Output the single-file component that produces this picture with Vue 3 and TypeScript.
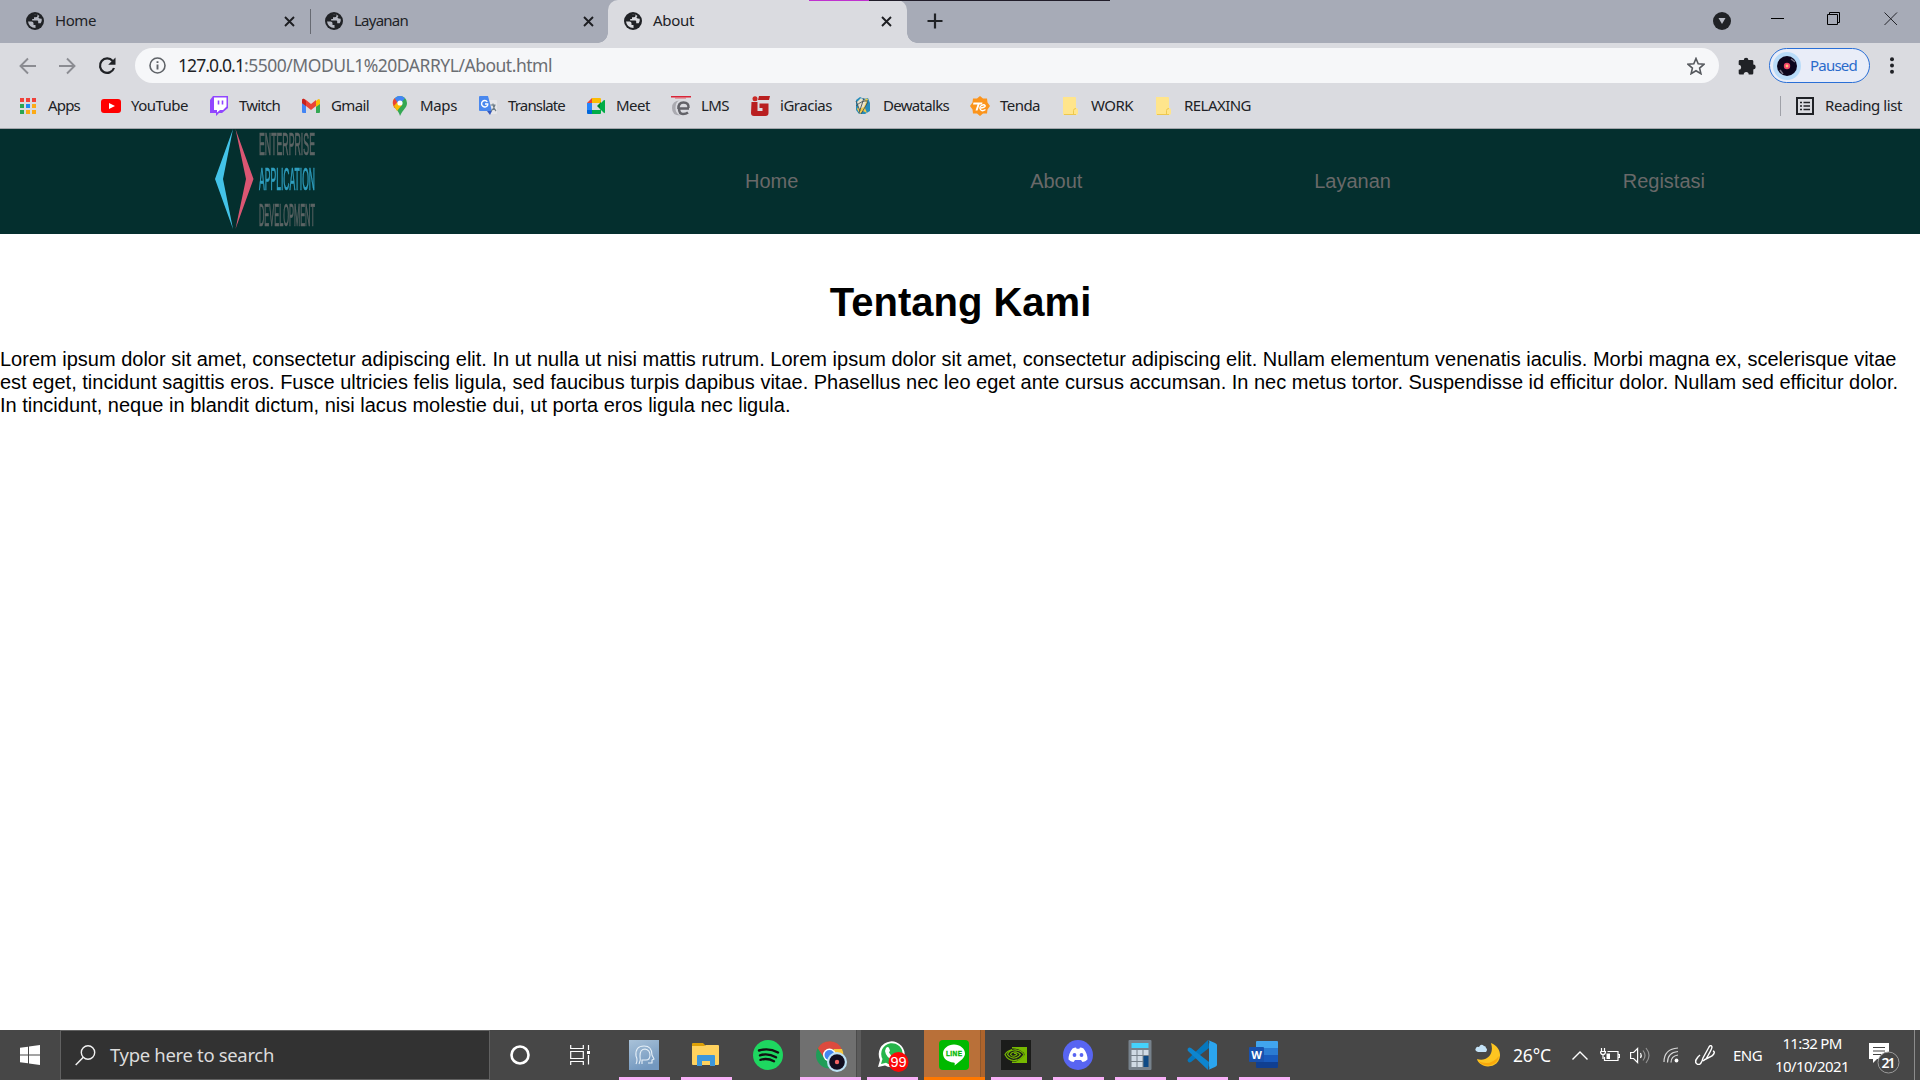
<script setup lang="ts">
import type { Directive } from 'vue'

// Spreads a label's letters so that it takes exactly the given width.
const vFit: Directive<HTMLElement, number> = {
  mounted(el, { value }) {
    const range = document.createRange()
    range.selectNodeContents(el)
    const natural = range.getBoundingClientRect().width
    const count = (el.textContent ?? '').length
    el.style.letterSpacing = `${(value - natural) / count}px`
  },
}

interface Tab { title: string; width: number; active?: boolean }
interface Bookmark { label: string; width: number; icon: string }
interface TaskApp { name: string; icon: string; state?: string }

const tabs: Tab[] = [
  { title: 'Home', width: 41 },
  { title: 'Layanan', width: 54 },
  { title: 'About', width: 41, active: true },
]

const folder = '<path d="M2 1h12q1 0 1 1v10q2 0 2 2v3q0 2-2 2H3q-1 0-1-1z" fill="#ffe58c"/><path d="M12.500 18.500v-4q0-2 2.500-2M3 18.500h12" fill="none" stroke="#eec84e"/>'

const bookmarks: Bookmark[] = [
  { label: 'Apps', width: 32, icon: '<g><path d="M2 2h4v4H2zM8 2h4v4H8zM14 2h4v4h-4z" fill="#f0413a"/><path d="M2 8h4v4H2zM2 14h4v4H2z" fill="#2aa552"/><path d="M8 8h4v4H8z" fill="#1e88f5"/><path d="M14 8h4v4h-4zM8 14h4v4H8zM14 14h4v4h-4z" fill="#fcaa16"/></g>' },
  { label: 'YouTube', width: 57, icon: '<rect y="3" width="20" height="14" rx="3" fill="#f00"/><path d="M8 7l6 3-6 3z" fill="#fff"/>' },
  { label: 'Twitch', width: 41, icon: '<path d="M4 0h15v12l-6 5h-3l-3 3v-3H1V4z" fill="#9146ff"/><path d="M5 1.500h12.500v9L14 14h-3l-3 2.500V14H5z" fill="#fff"/><path d="M9.500 4.500v4M13.500 4.500v4" stroke="#9146ff" stroke-width="1.600"/>' },
  { label: 'Gmail', width: 38, icon: '<path d="M1 5h4v12H2q-1 0-1-1z" fill="#4285f4"/><path d="M15 5h4v11q0 1-1 1h-3z" fill="#34a853"/><path d="M15 5q4-4 4 0v3l-4 3z" fill="#fbbc04"/><path d="M1 5q0-4 4-1l5 4 5-4v6l-5 4-5-4-4-3z" fill="#ea4335"/><path d="M1 5q0-3 2-2l2 2v5L1 7z" fill="#c5221f"/>' },
  { label: 'Maps', width: 37, icon: '<path d="M10 0a7 7 0 0 1 7 7c0 5-4 6-7 13C9 14 3 12 3 7a7 7 0 0 1 7-7z" fill="#34a853"/><path d="M3.500 10Q1.500 5 5 2l4 4-5 6z" fill="#fbbc04"/><path d="M3.500 9.500Q1.500 5 5 2l4 5-4.500 5z" fill="#ea4335"/><path d="M4 10l5-6 3 5-5 6z" fill="#fbbc04"/><path d="M4.700 2.300Q10-2.500 15 2.300L9 9z" fill="#4285f4"/><circle cx="10" cy="7" r="2.600" fill="#fff"/>' },
  { label: 'Translate', width: 57, icon: '<path d="M8 4h10q1 0 1 1v12q0 1-1 1h-6z" fill="#e6e6e9"/><path d="M2 0h8l4 15H2q-1 0-1-1V1q0-1 1-1z" fill="#4a88ee"/><path d="M9 15h5l-2 4z" fill="#3457bd"/><path d="M9.300 5.800A3.200 3.200 0 1 0 9.700 9V8H7" fill="none" stroke="#fff" stroke-width="1.400"/><path d="M12.500 9h5M15 7.500V9q1 4 3 6M17 9q-1 4-4 6" fill="none" stroke="#6d7d88" stroke-width="1.100"/>' },
  { label: 'Meet', width: 34, icon: '<path d="M6 2h8q1 0 1 1v4H6z" fill="#fbbc04"/><path d="M6 2v5H1z" fill="#ea4335"/><path d="M1 7h5v7H1z" fill="#2684fc"/><path d="M1 14h5v4H2q-1 0-1-1z" fill="#0066da"/><path d="M6 14h9v3q0 1-1 1H6z" fill="#00ac47"/><path d="M11 10l4-4v8z" fill="#00832d"/><path d="M14 8l4-4q1-.5 1 1v11q0 1.500-1 1l-4-4z" fill="#00ac47"/>' },
  { label: 'LMS', width: 28, icon: '<path d="M0 0h20v1.500H0z" fill="#da2437"/><path d="M4 1.500h11v1H4z" fill="#e0606c"/><path d="M9 4.500Q1 4.500 1 12t8 7.500Q4 17 4.500 11T9 4.500z" fill="#aaaab0"/><path d="M18 12.500H8Q8 18 12 18q3 0 5-1.500" fill="none" stroke="#626268" stroke-width="2.500"/><path d="M7.500 13Q7 6.500 12.500 6.500T17.500 12" fill="none" stroke="#626268" stroke-width="2.500"/>' },
  { label: 'iGracias', width: 52, icon: '<path d="M9 0h11l-1 4H8zM1.500 6h6v9h5v-3h-3V7.500h9V17q0 3-3 3H4q-3 0-3-3z" fill="#b91f20"/><circle cx="5" cy="2.700" r="2.500" fill="#c92a26"/>' },
  { label: 'Dewatalks', width: 66, icon: '<path d="M3 4l4-3 4 2 4-1 2 5v8l-5 3H6l-3-4z" fill="#258dbb"/><path d="M9 8q4-7 6-5l-3 9 2 5-4-2-3 3-3-5 3-5z" fill="#f0ca4a"/><path d="M4 6l4-4 5 4-2 5-5 2z" fill="#e9e2cc"/><path d="M3 5l4 10M11 2l-5 15M3 10q6-6 12-5M15 6l-7 12" stroke="#45525b" fill="none" stroke-width=".9"/>' },
  { label: 'Tenda', width: 40, icon: '<path d="M10 0l3 2.500 4 0 .5 4L20 10l-2.500 3.500-.5 4-4 0L10 20l-3-2.500-4 0-.5-4L0 10l2.500-3.500.5-4 4 0z" fill="#fb941c"/><path d="M3.500 6.500h9L12 8.500H9.500l-2 6h-2l2-6H3z" fill="#fff"/><path d="M11 12q5-1 4-2.500t-3.500 0-1 4 5 0" fill="none" stroke="#fff" stroke-width="1.400"/>' },
  { label: 'WORK', width: 42, icon: folder },
  { label: 'RELAXING', width: 67, icon: folder },
]

const apps: TaskApp[] = [
  { name: 'head', icon: '<linearGradient id="hd" x2=".4" y2="1"><stop stop-color="#a9c2d9"/><stop offset="1" stop-color="#7398bf"/></linearGradient><path d="M0 0h30v30H0z" fill="url(#hd)"/><path d="M7 24q2-4 0-8Q6 6 15 6q8 0 8 9l2 4-2 1v3h-4M10 24q2-4 1-8 0-7 5-7 5 1 5 6 0 5-4 5h-4v4" fill="none" stroke="#e5eff7" stroke-width="1.100"/>' },
  { name: 'explorer', icon: '<path d="M1 4q0-1 1-1h10l2 2v4H1z" fill="#dda006"/><path d="M1 6h12l2-1h12q1 0 1 1v18q0 1-1 1H2q-1 0-1-1z" fill="#ffd25e"/><path d="M6 26V16q0-1 1-1h16q1 0 1 1v10h-5v-5h-8v5z" fill="#3c97dc"/>' },
  { name: 'spotify', state: 'idle', icon: '<circle cx="15" cy="15" r="15" fill="#1ed760"/><path d="M6 10.500q10-3 19 2M7 15.300q8-2.500 16 2M7.500 19.800q7-2 13.500 1.500" stroke="#111" fill="none" stroke-linecap="round" stroke-width="2.400"/>' },
  { name: 'chrome', state: 'open', icon: '<circle cx="14.500" cy="15" r="13.500" fill="#1f9d58"/><path d="M2.800 8.300A13.500 13.500 0 0 1 27 9.500H14.500L8.500 17z" fill="#dc4a3e"/><path d="M27 9A13.500 13.500 0 0 1 15.500 28.500L19.500 18l-1-9z" fill="#f8c63d"/><circle cx="14.500" cy="15" r="6.500" fill="#fff"/><circle cx="14.500" cy="15" r="5" fill="#4387f2"/><circle cx="22" cy="22" r="10" fill="#bde2f6"/><circle cx="22" cy="22" r="7.800" fill="#110d20"/><circle cx="22" cy="22" r="2.200" fill="#f36363"/>' },
  { name: 'whatsapp', icon: '<path d="M1 27l2-7A13 13 0 1 1 8 25.500z" fill="#fff"/><path d="M4 24l1.500-5A10.700 10.700 0 1 1 9 22.800z" fill="#27b54b"/><path d="M9 8q2-2 3 0l1 2.500-1 2q2 4 5 5l2-2 3 2q0 4-5 3Q9 18 8 11z" fill="#fff"/><circle cx="21.500" cy="22" r="10" fill="#fb0808"/><text x="21.500" y="27" text-anchor="middle" fill="#fff" font-size="14.500" font-family="Liberation Sans, sans-serif">99</text>' },
  { name: 'line', state: 'alert', icon: '<rect width="30" height="30" rx="4" fill="#00b900"/><path d="M15 4.500c6 0 11 4 11 9 0 4-4 7-10.500 12 .5-2 .5-3-1-3-6-.500-10.500-4-10.500-9s5-9 11-9z" fill="#fff"/><text x="15" y="16" text-anchor="middle" textLength="16" fill="#00b900" stroke="#00b900" stroke-width=".3" font-size="6.500" font-weight="700" font-family="Liberation Sans, sans-serif">LINE</text>' },
  { name: 'nvidia', icon: '<path d="M0 0h30v30H0z" fill="#1b1c1a"/><path d="M11 7h15v16H11z" fill="#76b900"/><path d="M11 8.500q8-.5 13 6-4 5-9 7h-4z" fill="#1b1c1a"/><path d="M11 9.500Q6 11 4 14.500q3 6 9 6 6 0 10-6-4-5-10-4.500-5 .5-6.500 4.500 3 4 7 3.500 4-.5 6-3.500-3-3-6.500-2.500Q10 12.500 9.500 14.500q1.500 2 3.500 1.700 2-.2 3-1.700-1.500-1.500-3-1" fill="none" stroke="#76b900" stroke-width="1.200"/>' },
  { name: 'discord', icon: '<circle cx="15" cy="15" r="15" fill="#5865f2"/><path d="M9.500 8.500q2-1 3.500-1l.7 1.200h2.600L17 7.500q2 0 3.500 1 4 5 4 11-2 2-5 2.500L18 20h-6l-1.500 2q-3-.5-5-2.500 0-6 4-11z" fill="#fff"/><ellipse cx="11.500" cy="15" rx="1.900" ry="2.100" fill="#5865f2"/><ellipse cx="18.500" cy="15" rx="1.900" ry="2.100" fill="#5865f2"/>' },
  { name: 'calculator', icon: '<rect x="3.500" width="23" height="30" rx="1" fill="#77828c"/><path d="M6.500 3h17v5h-17z" fill="#45d2fb"/><path d="M6.500 10h5v5h-5zM12.500 10h5v5h-5zM18.500 10h5v5h-5zM6.500 16h5v5h-5zM12.500 16h5v5h-5zM6.500 22h5v5h-5zM12.500 22h5v5h-5z" fill="#d0dbe5"/><path d="M18.500 16h5v11h-5z" fill="#0d4a86"/>' },
  { name: 'vscode', icon: '<path d="M22 8L4 22q-2 1-3-.5-1-1.500 0-2.500L21 0z" fill="#0578bf"/><path d="M22 22L4 8Q2 7 1 8.500 0 10 1 11l20 19z" fill="#0d85cf"/><path d="M21 0l7 3q2 1 2 2v20q0 1-2 2l-7 3q2-1 1-4V4q1-3-1-4z" fill="#2ba5ef"/>' },
  { name: 'word', icon: '<path d="M7 2q0-1 1-1h20q1 0 1 1v6H7z" fill="#41a5ee"/><path d="M7 8h22v7H7z" fill="#2b7cd3"/><path d="M7 15h22v7H7z" fill="#185abd"/><path d="M7 22h22v5q0 1-1 1H8q-1 0-1-1z" fill="#103f91"/><rect y="7" width="15" height="15" rx="1" fill="#1851ae"/><text x="7.500" y="18.500" text-anchor="middle" fill="#fff" font-size="11" font-weight="700" font-family="Open Sans, sans-serif">W</text>' },
]

const navLinks: string[] = ['Home', 'About', 'Layanan', 'Registasi']
</script>

<template>
  <div class="screen">
    <div class="tabstrip">
      <template v-for="(tab, i) in tabs" :key="tab.title">
        <i v-if="i === 1" class="tabsep"></i>
        <div class="tab" :class="{ active: tab.active }">
          <svg class="globe" viewBox="0 0 18 18"><circle cx="9" cy="9" r="9" fill="#202226" /><path class="land" d="M2 9.500h3.500q2 0 2 1.700V13h2v3Q3 16 2 9.500zM8 2.200h3.500v1.500q0 1.500-2 1.500H8V7H6.200v1.500h5q1 0 1 1v1.800h2.500q1.500-2 1-4.500l-2.200-.2-1.200-1.400 1.200-1.200Q11 1.700 8 2.200z" /></svg>
          <span v-fit="tab.width" class="tabtitle">{{ tab.title }}</span>
          <svg class="tabx" viewBox="0 0 11 11"><path d="M1 1l9 9M10 1l-9 9" stroke="#1d1e22" stroke-width="1.900" /></svg>
        </div>
      </template>
      <svg class="plus" viewBox="0 0 16 16"><path d="M8 .5v15M.5 8h15" stroke="#202226" stroke-width="2.200" /></svg>
      <div class="winctl">
        <svg width="18" height="18" viewBox="0 0 18 18" class="drop"><circle cx="9" cy="9" r="9" fill="#202226" /><path d="M5.500 6h7L9 12z" fill="#b9bcc6" /></svg>
        <svg width="13" height="14" viewBox="0 0 13 14" class="min"><path d="M0 7.500h13" stroke="#000" /></svg>
        <svg width="13" height="14" viewBox="0 0 13 14" class="max"><path d="M.5 2.500h10v10H.5zM2.500 2.500V.5h10v10h-2" fill="none" stroke="#000" /></svg>
        <svg width="14" height="14" viewBox="0 0 14 14"><path d="M.5.500l12.500 12.500M13 .500L.5 13" stroke="#24252a" /></svg>
      </div>
      <div class="topline"></div>
    </div>

    <div class="toolbar">
      <svg class="back" viewBox="0 0 18 18"><path d="M17 9H2M9 1.500L1.500 9 9 16.500" fill="none" stroke="#8b8c92" stroke-width="1.900" /></svg>
      <svg class="fwd" viewBox="0 0 18 18"><path d="M1 9h15M9 1.500L16.500 9 9 16.500" fill="none" stroke="#8b8c92" stroke-width="1.900" /></svg>
      <svg class="reload" viewBox="0 0 18 18"><path d="M14.700 4A7.200 7.200 0 1 0 16 11" fill="none" stroke="#202226" stroke-width="2.200" /><path d="M17.500.500v7.300h-7.300z" fill="#202226" /></svg>
      <div class="omnibox">
        <svg class="info" viewBox="0 0 17 17"><circle cx="8.500" cy="8.500" r="7.500" fill="none" stroke="#5f6368" stroke-width="1.600" /><path d="M8.500 7.500v5M8.500 4.200v1.900" stroke="#5f6368" stroke-width="1.900" /></svg>
        <span class="url"><span v-fit="66" class="host">127.0.0.1</span><span v-fit="308">:5500/MODUL1%20DARRYL/About.html</span></span>
        <svg class="star" viewBox="0 0 18 18"><path d="M9 1.500l2.200 5.300 5.700.5-4.300 3.800 1.300 5.600L9 13.700l-4.900 3 1.300-5.600L1.100 7.300l5.700-.5z" fill="none" stroke="#55585d" stroke-width="1.600" /></svg>
      </div>
      <svg class="puzzle" viewBox="0 0 18 18"><path d="M5.800 3a2.300 2.300 0 0 1 4.600 0H14q1.300 0 1.300 1.300v3.300a2.400 2.400 0 0 1 0 4.800v3.800q0 1.300-1.300 1.300h-3.300a2.500 2.500 0 0 0-5 0H2q-1.300 0-1.300-1.300v-3.400a2.500 2.500 0 0 0 0-5V4.300Q.7 3 2 3z" fill="#202226" /></svg>
      <div class="paused">
        <svg class="avatar" viewBox="0 0 28 28"><circle cx="14" cy="14" r="14" fill="#b9dcf9" /><circle cx="14" cy="14" r="10" fill="#0c071e" /><path d="M18 7l4 3M7 18l3 4" stroke="#777486" stroke-width="1.500" /><circle cx="14" cy="14" r="3.200" fill="#f2456b" /><circle cx="14" cy="14" r="1.400" fill="#ffc07a" /></svg>
        <span v-fit="47">Paused</span>
      </div>
      <svg class="dots" viewBox="0 0 4 17"><circle cx="2" cy="2.300" r="2" /><circle cx="2" cy="8.500" r="2" /><circle cx="2" cy="14.700" r="2" /></svg>
    </div>

    <div class="bookmarks">
      <div v-for="b in bookmarks" :key="b.label" class="bookmark">
        <svg width="20" height="20" viewBox="0 0 20 20" v-html="b.icon"></svg>
        <span v-fit="b.width" :style="{ width: b.width + 'px' }">{{ b.label }}</span>
      </div>
      <div class="reading">
        <svg width="18" height="18" viewBox="0 0 18 18"><path d="M1 1h16v16H1z" fill="none" stroke="#202226" stroke-width="2" /><path d="M4 5.500h2M4 9h2M4 12.500h2M7.500 5.500H14M7.500 9H14M7.500 12.500H14" stroke="#202226" stroke-width="1.500" /></svg>
        <span v-fit="77">Reading list</span>
      </div>
    </div>

    <header class="site">
      <svg class="logo" viewBox="0 0 100 100">
        <path d="M18 0L0 50l18 50L8 50z" fill="#43c3e8" />
        <path d="M20.500 0l18 50-18 50L31 50z" fill="#db5673" />
        <g class="logotext">
          <text x="44" y="25.500" textLength="56" lengthAdjust="spacingAndGlyphs" fill="#5c6464" stroke="#5c6464">ENTERPRISE</text>
          <text x="44" y="61" textLength="56" lengthAdjust="spacingAndGlyphs" fill="#2f9fc0" stroke="#2f9fc0">APPLICATION</text>
          <text x="44" y="97" textLength="56" lengthAdjust="spacingAndGlyphs" fill="#5c6464" stroke="#5c6464">DEVELOPMENT</text>
        </g>
      </svg>
      <nav>
        <a v-for="l in navLinks" :key="l">{{ l }}</a>
      </nav>
    </header>

    <main>
      <h1>Tentang Kami</h1>
      <p>
        Lorem ipsum dolor sit amet, consectetur adipiscing elit. In ut nulla ut nisi mattis rutrum. Lorem ipsum dolor sit amet, consectetur adipiscing elit. Nullam elementum venenatis iaculis. Morbi magna ex, scelerisque vitae est eget, tincidunt sagittis eros. Fusce ultricies felis ligula, sed faucibus turpis dapibus vitae. Phasellus nec leo eget ante cursus accumsan. In nec metus tortor. Suspendisse id efficitur dolor. Nullam sed efficitur dolor. In tincidunt, neque in blandit dictum, nisi lacus molestie dui, ut porta eros ligula nec ligula.
      </p>
    </main>

    <footer class="taskbar">
      <div class="start">
        <svg width="20" height="20" viewBox="0 0 20 20"><path d="M0 2.800l8-1.100v7.800H0zM9 1.500L20 0v9.500H9zM0 10.500h8v7.800l-8-1.100zM9 10.500h11V20L9 18.500z" fill="#fff" /></svg>
      </div>
      <div class="search">
        <svg width="21" height="21" viewBox="0 0 21 21"><circle cx="13" cy="7.500" r="6.700" fill="none" stroke="#f2f2f2" stroke-width="1.400" /><path d="M8.300 12.300L.7 20" stroke="#f2f2f2" stroke-width="1.500" /></svg>
        <span v-fit="164">Type here to search</span>
      </div>
      <svg class="cortana" viewBox="0 0 20 20"><circle cx="10" cy="10" r="8.500" fill="none" stroke="#fff" stroke-width="2.600" /></svg>
      <svg class="taskview" viewBox="0 0 21 20"><path d="M.7 0v3.500h12.600V0M.7 20v-3.500h12.600V20M.7 6.500h12.600v7H.7zM18.500 0v5M18.500 10v9.500" fill="none" stroke="#fff" stroke-width="1.200" /><path d="M17 6h3v3h-3z" fill="#fff" /></svg>
      <div class="apps">
        <div v-for="a in apps" :key="a.name" class="app" :class="a.state">
          <svg viewBox="0 0 30 30" v-html="a.icon"></svg>
        </div>
      </div>
      <div class="tray">
        <svg class="weather" viewBox="0 0 25 24"><path d="M16 0c12 5 11 18 3 22C11 26 3 21 2 16c8 3 18-3 14-16z" fill="#fdc521" /><path d="M24 13q-1 7-8 9T3 18q12 6 21-5z" fill="#f9a90d" /><path d="M3 9Q-1 8 1 5q1-2 3-1 2-4 5-1 2 0 2 2 2 1 0 4z" fill="#c4e3f8" /></svg>
        <span v-fit="38" class="temp">26°C</span>
        <svg class="chev" viewBox="0 0 16 9"><path d="M.5 8.500L8 1l7.500 7.500" fill="none" stroke="#fff" stroke-width="1.400" /></svg>
        <svg class="battery" viewBox="0 0 20 15"><path d="M7.500 3.500h10.500v9H4.500V9M18.500 6.500h1v3h-1M1.500 0v3M4.500 0v3M.5 3.500h5q0 3-2.500 3t-2.500-3M3 6v5" fill="none" stroke="#fff" stroke-width="1.200" /><path d="M6.500 5.500H10V11H6.500z" fill="#fff" /></svg>
        <svg class="volume" viewBox="0 0 20 17"><path d="M.6 5.500h3l4-4v14l-4-4h-3z" fill="none" stroke="#fff" stroke-width="1.200" /><path d="M10.500 6q1.500 2.500 0 5" fill="none" stroke="#fff" stroke-width="1.200" /><path d="M13 3.500q4 5 0 10M16 1q6 7.500 0 15" fill="none" stroke="#949494" stroke-width="1.200" /></svg>
        <svg class="wifi" viewBox="0 0 16 16"><path d="M1 15Q1 2 15 1M4.500 15.500Q4.500 5.500 15 4.500M8 15.500Q8 9 15 8" fill="none" stroke="#d8d8d8" stroke-width="1.200" /><circle cx="13.500" cy="13.500" r="1.900" fill="#fff" /></svg>
        <svg class="pen" viewBox="0 0 20 20"><path d="M3 12Q-1 17 2 19t5-3l1-3 6-11q2-3 3 0 0 2-6 12l-3 2M5 10q-6 5-4 8M9 15l8-4q4-4 1-5" fill="none" stroke="#fff" stroke-width="1.400" /></svg>
        <span v-fit="29" class="lang">ENG</span>
        <div class="clock"><span v-fit="59">11:32 PM</span><span v-fit="74">10/10/2021</span></div>
        <svg class="notif" viewBox="0 0 34 32"><path d="M0 1h20v16H8l-4 4v-4H0z" fill="#fff" /><path d="M4 5.500h12M4 9h12M4 12.500h8" stroke="#444" stroke-width="1.200" /><circle cx="19.500" cy="20.500" r="10.500" fill="#454545" stroke="#9a9a9a" /><text x="19.500" y="25.500" text-anchor="middle" textLength="14" fill="#fff">21</text></svg>
      </div>
    </footer>
  </div>
</template>

<style>
body {
  margin: 0;
  overflow: hidden;
}
</style>

<style scoped>
.screen {
  width: 1920px;
  height: 1080px;
  display: flex;
  flex-direction: column;
  overflow: hidden;
  background: #fff;
  font-family: "Noto Sans", "Open Sans", sans-serif;
  font-size: 15px;
  color: #202226;
}
.screen * {
  box-sizing: border-box;
}
svg {
  display: block;
  flex: none;
}
span {
  white-space: nowrap;
}
.tabtitle,
.url,
.paused span,
.bookmark span,
.reading span,
.search span {
  padding-bottom: 2px;
}
.tabstrip {
  position: relative;
  height: 43px;
  flex: none;
  display: flex;
  background: #a7abb7;
}
.topline {
  position: absolute;
  left: 809px;
  top: 0;
  width: 301px;
  height: 1px;
  background: linear-gradient(90deg, #c031cf 60px, #211d2a 60px);
}
.tabsep {
  width: 1px;
  height: 25px;
  margin: 9px -1px 0 0;
  background: #676a72;
}
.tab {
  width: 299px;
  height: 43px;
  padding: 0 15px 1px 15px;
  display: flex;
  align-items: center;
}
.tab:first-child {
  width: 310px;
  padding-left: 26px;
}
.tab.active {
  position: relative;
  width: 299px;
  margin-left: -1px;
  padding-left: 16px;
  border-radius: 10px 10px 0 0;
  background: #dadbe0;
}
.tab.active::before,
.tab.active::after {
  content: "";
  position: absolute;
  bottom: 0;
  width: 10px;
  height: 10px;
}
.tab.active::before {
  left: -10px;
  background: radial-gradient(circle at 0 0, transparent 9.5px, #dadbe0 10px);
}
.tab.active::after {
  right: -10px;
  background: radial-gradient(circle at 100% 0, transparent 9.5px, #dadbe0 10px);
}
.globe {
  width: 18px;
  height: 18px;
}
.land {
  fill: #b4b7c1;
}
.active .land {
  fill: #dadbe0;
}
.tabtitle {
  margin-left: 11px;
  flex: 1;
}
.tabx {
  width: 11px;
  height: 11px;
}
.plus {
  width: 16px;
  height: 16px;
  margin: 13px 0 0 20px;
}
.winctl {
  display: flex;
  margin: 12px 22px 0 auto;
}
.drop {
  margin-right: 40px;
}
.min {
  margin-right: 43px;
  margin-top: -1px;
}
.max {
  margin-right: 44px;
}
.toolbar {
  height: 44px;
  flex: none;
  display: flex;
  align-items: center;
  padding: 1px 26px 0 19px;
  background: #dadbe0;
}
.back,
.fwd,
.reload {
  width: 18px;
  height: 18px;
}
.fwd {
  margin-left: 21px;
}
.reload {
  margin-left: 22px;
}
.omnibox {
  width: 1584px;
  height: 35px;
  margin-left: 19px;
  display: flex;
  align-items: center;
  padding: 0 14px;
  border-radius: 18px;
  background: #f6f7f9;
}
.info {
  width: 17px;
  height: 17px;
}
.url {
  flex: 1;
  margin-left: 12px;
  font-size: 17.5px;
  color: #6b6e73;
}
.host {
  color: #202226;
}
.star {
  width: 18px;
  height: 18px;
}
.puzzle {
  width: 18px;
  height: 18px;
  margin-left: 19px;
}
.paused {
  width: 101px;
  height: 35px;
  margin-left: 13px;
  display: flex;
  align-items: center;
  padding-left: 3px;
  gap: 9px;
  border: 1px solid #2a6fd6;
  border-radius: 18px;
  background: #e9edf8;
  color: #2a6bcb;
}
.avatar {
  width: 28px;
  height: 28px;
}
.dots {
  width: 4px;
  height: 17px;
  margin-left: auto;
  fill: #202226;
}
.bookmarks {
  height: 42px;
  flex: none;
  display: flex;
  align-items: center;
  gap: 21px;
  padding: 0 18px 4px 18px;
  border-bottom: 1px solid #a2a5ab;
  background: #dadbe0;
}
.bookmark {
  display: flex;
  align-items: center;
  gap: 10px;
}
.reading {
  display: flex;
  align-items: center;
  height: 20px;
  gap: 11px;
  margin-left: auto;
  padding-left: 15px;
  border-left: 1px solid #9fa1a8;
}
.site {
  height: 105px;
  flex: none;
  display: flex;
  padding: 0 215px;
  justify-content: space-between;
  background: #042f2e;
  font-family: "Liberation Sans", Arial, sans-serif;
}
.logo {
  width: 100px;
  height: 100px;
  overflow: visible;
  filter: blur(0.5px);
}
.logotext {
  font: 30.5px "Liberation Sans", Arial, sans-serif;
  stroke-width: 0.7px;
}
nav {
  width: 960px;
  display: flex;
  align-items: center;
  justify-content: space-between;
  font-size: 20px;
  color: #696969;
}
main {
  flex: 1;
  font-family: "Liberation Sans", Arial, sans-serif;
  color: #000;
}
h1 {
  margin: 45px 0 0;
  padding-left: 1px;
  font-size: 40px;
  line-height: 46px;
  text-align: center;
}
p {
  margin: 23px 0 0;
  font-size: 20px;
  line-height: 23px;
}
.taskbar {
  height: 50px;
  flex: none;
  display: flex;
  align-items: center;
  background: #474747;
  color: #fff;
}
.start {
  width: 60px;
  padding-left: 20px;
}
.search {
  width: 430px;
  height: 50px;
  display: flex;
  align-items: center;
  padding-left: 14px;
  gap: 14px;
  border: 1px solid #616161;
  background: #323232;
  color: #dcdcdc;
  font-size: 18.5px;
}
.cortana {
  width: 20px;
  height: 20px;
  margin-left: 20px;
}
.taskview {
  width: 21px;
  height: 20px;
  margin-left: 40px;
}
.apps {
  display: flex;
  margin-left: 28px;
}
.app {
  position: relative;
  width: 51px;
  height: 50px;
  margin-right: 11px;
  padding: 10px 0 0 10px;
  border-bottom: 3px solid #f8b1f8;
}
.app svg {
  width: 30px;
  height: 30px;
  overflow: visible;
}
.app.idle {
  border-color: transparent;
}
.app.open,
.app.alert {
  width: 61px;
  margin: 0 6px 0 -5px;
  padding-left: 15px;
}
.app.open {
  background: linear-gradient(90deg, #707070 56px, #4b4b4b 56px, #4b4b4b 57px, #5b5b5b 57px);
}
.app.alert {
  border-color: #ff7800;
  background: linear-gradient(90deg, #b97039 56px, #8e572c 56px, #8e572c 57px, #ad642c 57px);
}
.tray {
  display: flex;
  align-items: center;
  height: 50px;
  margin-left: auto;
  border-right: 1px solid #8c8c8c;
  margin-right: 5px;
}
.weather {
  width: 25px;
  height: 24px;
}
.temp {
  width: 38px;
  margin-left: 13px;
  font-size: 17.5px;
}
.chev {
  width: 16px;
  height: 9px;
  margin-left: 21px;
}
.battery {
  width: 20px;
  height: 15px;
  margin-left: 12px;
}
.volume {
  width: 20px;
  height: 17px;
  margin-left: 10px;
}
.wifi {
  width: 16px;
  height: 16px;
  margin-left: 13px;
}
.pen {
  width: 20px;
  height: 20px;
  margin-left: 16px;
}
.lang {
  width: 29px;
  margin-left: 18px;
}
.clock {
  width: 74px;
  margin-left: 13px;
  display: flex;
  flex-direction: column;
  align-items: center;
  line-height: 23px;
}
.notif {
  width: 34px;
  height: 32px;
  margin: 5px 11px 0 20px;
  font: 600 14px "Noto Sans", sans-serif;
}
</style>
